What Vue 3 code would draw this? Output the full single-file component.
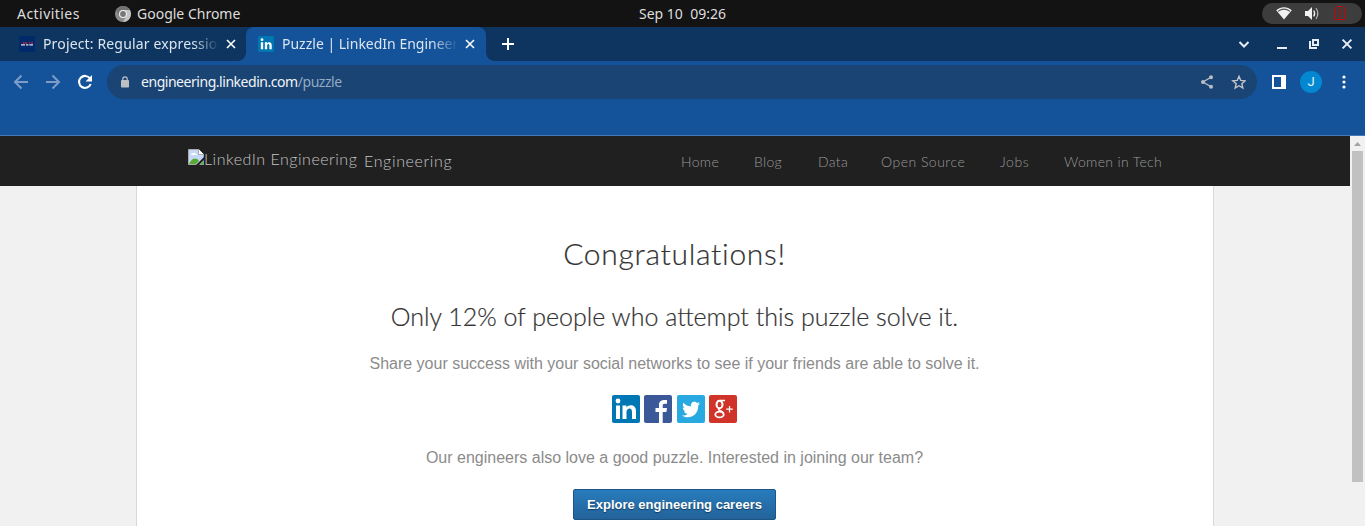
<script setup>
const links = [
  { label: 'Home', cls: 'home' },
  { label: 'Blog', cls: 'blog' },
  { label: 'Data', cls: 'data' },
  { label: 'Open Source', cls: 'source' },
  { label: 'Jobs', cls: 'jobs' },
  { label: 'Women in Tech', cls: 'women' },
]
</script>

<template>
  <div class="screen">
    <div class="desktop-bar">
      <span class="activities">Activities</span>
      <svg class="chrome" width="16" height="16" viewBox="0 0 16 16">
        <circle cx="8" cy="8" r="8" fill="#8b8b8b" />
        <path d="M8 4h7A8 8 0 0 0 1.1 4L4.5 10A4 4 0 0 1 8 4z" fill="#727272" />
        <path d="M8 4h6.9A8 8 0 0 1 8 16l3.4-6A4 4 0 0 0 8 4z" fill="#c4c4c4" />
        <circle cx="8" cy="8" r="4" fill="#f2f2f2" />
        <circle cx="8" cy="8" r="2.9" fill="#777" />
      </svg>
      <span class="appname">Google Chrome</span>
      <span class="clock">Sep 10&nbsp; 09:26</span>
      <div class="tray">
        <svg width="100" height="21" viewBox="0 0 100 21">
          <path d="M14.2 7.2C18.8 3.2 25.2 3.2 29.8 7.2L22 16.6z" fill="#f2f2f2" />
          <path d="M16 8.4C19.6 5.7 24.4 5.7 28 8.4" fill="none" stroke="#555" stroke-width="1.1" />
          <path d="M43 8h3l4-4v13l-4-4h-3z" fill="#f2f2f2" />
          <path d="M51.7 7.5q2 3 0 6" fill="none" stroke="#f2f2f2" stroke-width="1.3" />
          <path d="M54 5q3.6 5.5 0 11" fill="none" stroke="#bbb" stroke-width="1.1" />
          <path d="M75.500 3.500h5M74.500 4.500h-1V16.500h9V4.500h-1" fill="none" stroke="#d00000" />
          <path d="M78 5.500v7M78 13.500v1.500" stroke="#d00000" stroke-width="1.2" />
        </svg>
      </div>
    </div>

    <div class="tabs">
      <div class="tab first">
        <svg class="fav" width="16" height="16" viewBox="0 0 16 16">
          <rect width="16" height="16" rx="1" fill="#002a69" />
          <path d="M4 7h1.500M7 6v2M9.800 6.500h1M13 6v2" stroke="#e51c3c" stroke-width="1.300" fill="none" />
          <path d="M2 8.800h4M7 8.800h2.500M10.300 8.800h3.700" stroke="#d9e0ee" stroke-width="1.200" fill="none" />
        </svg>
        <span class="title t1">Project: Regular expression</span>
        <svg class="x" width="10" height="10" viewBox="0 0 10 10"><path d="M1 1l8 8M9 1L1 9" /></svg>
      </div>
      <div class="tab active">
        <svg class="fav" width="16" height="16" viewBox="0 0 28 28">
          <rect width="28" height="28" rx="2" fill="#0077b5" />
          <path d="M5 11h4v12H5zM12 11h4v2c2-3 8-3 8 3v7h-4v-6c0-4-4-4-4 0v6h-4z" fill="#fff" />
          <circle cx="7" cy="6.5" r="2.4" fill="#fff" />
        </svg>
        <span class="title t2">Puzzle | LinkedIn Engineering</span>
        <svg class="x" width="10" height="10" viewBox="0 0 10 10"><path d="M1 1l8 8M9 1L1 9" /></svg>
      </div>
      <svg class="plus" width="12" height="12" viewBox="0 0 12 12"><path d="M6 0v12M0 6h12" /></svg>
      <svg class="wincontrols" width="120" height="34" viewBox="0 0 120 34">
        <path d="M4.5 15l4.5 4.5 4.5-4.5" fill="none" stroke="#e7ecf2" stroke-width="2" />
        <path d="M42 21h10" stroke="#e7ecf2" stroke-width="2" />
        <path d="M78 13h5v5h-5z" fill="none" stroke="#e7ecf2" stroke-width="2" />
        <path d="M75 14v7h7" fill="none" stroke="#e7ecf2" stroke-width="2" />
        <path d="M107.6 12.6l8.8 8.8M116.4 12.6l-8.8 8.8" stroke="#e7ecf2" stroke-width="2" />
      </svg>
    </div>

    <div class="toolbar">
      <svg class="nav-icons" width="107" height="42" viewBox="0 0 107 42">
        <g fill="none" stroke="#7d9cc8" stroke-width="2">
          <path d="M28 21H15.5M21.5 14.5L15 21l6.5 6.5" />
          <path d="M46 21h12.5M52.5 14.5L59 21l-6.5 6.5" />
        </g>
        <path d="M90 17.5A6 6 0 1 0 90.7 23" fill="none" stroke="#fff" stroke-width="2.1" />
        <path d="M92 14v6.5h-6.5z" fill="#fff" />
      </svg>
      <div class="address">
        <svg width="8" height="12" viewBox="0 0 8 12">
          <path d="M1.8 5V3a2.2 2.2 0 0 1 4.4 0v2" fill="none" stroke="#bcc0c5" stroke-width="1.2" />
          <rect y="4" width="8" height="7.5" rx=".8" fill="#bcc0c5" />
        </svg>
        <span class="url">engineering.linkedin.com<i>/puzzle</i></span>
        <svg class="addr-icons" width="46" height="16" viewBox="0 0 46 16">
          <path d="M11.5 3L3 8l8.5 5" fill="none" stroke="#b9bec5" stroke-width="1.4" />
          <circle cx="11" cy="3.3" r="2" fill="#b9bec5" />
          <circle cx="3" cy="8" r="2" fill="#b9bec5" />
          <circle cx="11" cy="12.7" r="2" fill="#b9bec5" />
          <path d="M39 2.3l1.75 4.1 4.45.4-3.4 2.9 1.05 4.3L39 11.7 35.15 14l1.05-4.3-3.4-2.9 4.45-.4z" fill="none" stroke="#c3c6ca" stroke-width="1.4" />
        </svg>
      </div>
      <svg class="panel" width="14" height="14" viewBox="0 0 14 14"><path fill="#fff" fill-rule="evenodd" d="M0 0h14v14H0zM2 2v10h7V2z" /></svg>
      <span class="avatar">J</span>
      <svg class="dots" width="4" height="14" viewBox="0 0 4 14"><circle cx="2" cy="2" r="1.6" /><circle cx="2" cy="7" r="1.6" /><circle cx="2" cy="12" r="1.6" /></svg>
    </div>

    <div class="viewport">
      <div class="page">
        <header>
          <svg class="broken" width="16" height="16" viewBox="0 0 16 16">
            <path d="M.5.5h10l5 5v10H.5z" fill="#c6d8f8" stroke="#aaa" />
            <path d="M10.5 0v5.5H16" fill="#fff" stroke="#aaa" />
            <path d="M3 6q0-2 2-2 2-1 3 1h1v1z" fill="#fff" />
            <path d="M1 15c3-6 7-7 10-3l-3 3z" fill="#57ab35" />
            <path d="M8 16l8-8v3l-5 5z" fill="#202020" />
            <path d="M12 15.5l3.5-3.5v3.5z" fill="#57ab35" />
          </svg>
          <span class="alt">LinkedIn Engineering</span>
          <span class="brand">Engineering</span>
          <nav>
            <a v-for="l in links" :key="l.label" :class="l.cls">{{ l.label }}</a>
          </nav>
        </header>
        <main>
          <h1><span>Congratulations!</span></h1>
          <h2><span>Only 12% of people who attempt this puzzle solve it.</span></h2>
          <p class="share">Share your success with your social networks to see if your friends are able to solve it.</p>
          <div class="social">
            <svg width="28" height="28" viewBox="0 0 28 28">
              <rect width="28" height="28" rx="2" fill="#0077b5" />
              <path d="M4 10.5h4V24H4zM10.5 10.5h4v2c2-3.4 9.5-3.4 9.5 3.5v8h-4v-7c0-5-5.500-4-5.500 0v7h-4z" fill="#fff" />
              <circle cx="6" cy="6" r="2.4" fill="#fff" />
            </svg>
            <svg width="28" height="28" viewBox="0 0 28 28">
              <rect width="28" height="28" rx="2" fill="#3b5998" />
              <path d="M15 28V17h-3.500v-4H15v-3c0-4 2.500-5.500 8-4.900v3.600h-2.300c-1.700 0-2 .8-2 2V13H23l-.6 4h-3.700v11z" fill="#fff" />
            </svg>
            <svg width="28" height="28" viewBox="0 0 28 28">
              <rect width="28" height="28" rx="2" fill="#29a9e1" />
              <path d="M5 20.500c2.200.1 4-.4 5.500-1.600-1.800-.1-3-1.100-3.500-2.600h1.600C6.700 15.600 5.800 14.200 5.800 12.400l1.700.5C5.800 11.500 5.400 9.600 6.500 7.800c2 2.300 4.400 3.500 7.400 3.700-.5-3 1.300-4.700 3.400-4.700 1.200 0 2.100.5 2.800 1.200l2.500-1-1.500 2.100 2.100-.5-2 2C21.500 18.500 16 22.500 10.500 22.300c-2 0-4-.6-5.500-1.800z" fill="#fff" />
            </svg>
            <svg width="28" height="28" viewBox="0 0 28 28">
              <rect width="28" height="28" rx="2" fill="#d03327" />
              <g fill="none" stroke="#fff">
                <ellipse cx="10.500" cy="9.500" rx="3" ry="3.700" stroke-width="2" />
                <ellipse cx="10.500" cy="19.500" rx="4.200" ry="2.900" stroke-width="1.800" />
                <path d="M11 5.500h5M10.500 13q-2 1.500.5 2.500 3 1 3.500 3" stroke-width="1.600" />
                <path d="M20.500 11v6.500M17.200 14.200h6.600" stroke-width="1.200" />
              </g>
            </svg>
          </div>
          <p class="love">Our engineers also love a good puzzle. Interested in joining our team?</p>
          <button>Explore engineering careers</button>
        </main>
      </div>
      <div class="scrollbar">
        <svg width="15" height="15" viewBox="0 0 15 15"><path d="M4 10l3.500-4 3.500 4z" fill="#a3a3a3" /></svg>
        <div class="thumb"></div>
      </div>
    </div>
  </div>
</template>

<style>
html, body { margin: 0; overflow: hidden; }
</style>

<style scoped>
.screen { width: 1365px; height: 526px; overflow: hidden; display: flex; flex-direction: column; font-family: "Noto Sans", sans-serif; white-space: nowrap; }
.screen * { box-sizing: border-box; }
svg { display: block; flex: none; }
span, a { flex: none; }
.desktop-bar { height: 27px; flex: none; background: #131313; color: #dedede; display: flex; align-items: center; font-size: 14px; line-height: 26px; padding-left: 17px; }
.activities { width: 98px; letter-spacing: .45px; }
.appname { width: 502px; margin-left: 6px; }
.clock { width: 623px; }
.tray { width: 100px; height: 21px; border-radius: 11px; background: #3d3d3d; }
.tabs { height: 34px; flex: none; background: #0d355f; display: flex; align-items: center; }
.tab { height: 34px; display: flex; align-items: center; color: #dce5ef; font-size: 14px; flex: none; }
.first { width: 246px; padding-left: 19px; }
.active { width: 240px; padding-left: 12px; background: #14539a; border-radius: 8px 8px 0 0; position: relative; }
.active::before, .active::after { content: ""; position: absolute; bottom: 0; width: 8px; height: 8px; }
.active::before { left: -8px; background: radial-gradient(circle at 0 0, transparent 7.5px, #14539a 8px); }
.active::after { right: -8px; background: radial-gradient(circle at 100% 0, transparent 7.5px, #14539a 8px); }
.title { width: 176px; margin-left: 8px; overflow: hidden; line-height: 24px; -webkit-mask-image: linear-gradient(90deg, #000 150px, transparent 176px); mask-image: linear-gradient(90deg, #000 150px, transparent 176px); }
.t1 { letter-spacing: .15px; }
.x { margin-left: 7px; stroke: #fff; stroke-width: 1.6; fill: none; }
.plus { margin-left: 16px; stroke: #fff; stroke-width: 2; }
.wincontrols { margin-left: 721px; }
.toolbar { height: 75px; flex: none; background: #14539a; border-bottom: 1px solid #4579b4; display: flex; align-items: flex-start; }
.address { width: 1150px; height: 34px; margin-top: 4px; border-radius: 17px; background: #194473; display: flex; align-items: center; padding-left: 14px; }
.url { width: 1051px; margin-left: 12px; font-size: 14px; letter-spacing: -.46px; color: #f1f4f7; line-height: 32px; }
.url i { font-style: normal; color: #94a9c2; }
.addr-icons { margin-left: 8px; }
.panel { margin: 14px 0 0 15px; }
.avatar { width: 22px; height: 22px; margin: 10px 0 0 14px; border-radius: 50%; background: #0288d1; color: #e4f2fa; font: 13px/22px Roboto, sans-serif; text-align: center; }
.dots { margin: 14px 0 0 19.5px; fill: #fff; }
.viewport { flex: 1; display: flex; min-height: 0; }
.page { width: 1350px; background: #f1f1f1; display: flex; flex-direction: column; align-items: center; }
header { width: 1350px; height: 50px; flex: none; background: #202020; display: flex; padding-left: 188px; font-family: Lato, sans-serif; font-weight: 300; color: #c4c4c4; font-size: 16px; }
.broken { margin-top: 13px; }
.alt { width: 160px; line-height: 46px; letter-spacing: .52px; }
.brand { width: 317px; line-height: 50px; letter-spacing: .65px; }
nav { display: flex; font-size: 14px; line-height: 52px; color: #999; letter-spacing: .35px; }
.home { width: 73px; }
.blog { width: 64px; }
.data { width: 63px; }
.source { width: 119px; letter-spacing: .5px; }
.jobs { width: 64px; letter-spacing: .6px; }
main { width: 1078px; flex: 1; background: #fff; border: solid #d8d8d8; border-width: 0 1px; display: flex; flex-direction: column; align-items: center; font-family: "Liberation Sans", Arial, sans-serif; color: #8b8b8b; padding: 48px 1px 0 0; }
h1, h2, p { margin: 0; font-weight: 300; flex: none; }
h1, h2 { font-family: Lato, sans-serif; color: #333; -webkit-text-stroke: .2px #333; }
h1 { font-size: 30px; line-height: 38px; letter-spacing: .7px; }
h2 { font-size: 25px; line-height: 36px; margin-top: 26px; }
p { font-size: 16px; line-height: 20px; font-weight: 400; }
.share { margin-top: 20px; }
.social { display: flex; gap: 4.33px; margin-top: 21px; }
.love { margin-top: 25px; }
button { width: 203px; height: 31px; flex: none; margin-top: 21px; border: 1px solid #1b5686; border-radius: 2px; background: linear-gradient(#287bbc, #23639a); color: #fff; font: bold 13px/28px "Liberation Sans", Arial, sans-serif; text-shadow: 0 1px 1px #123b5d; padding: 0; }
.scrollbar { width: 15px; background: #f1f1f1; }
.thumb { width: 11px; height: 331px; background: #c1c1c1; margin-left: 2px; }
</style>
